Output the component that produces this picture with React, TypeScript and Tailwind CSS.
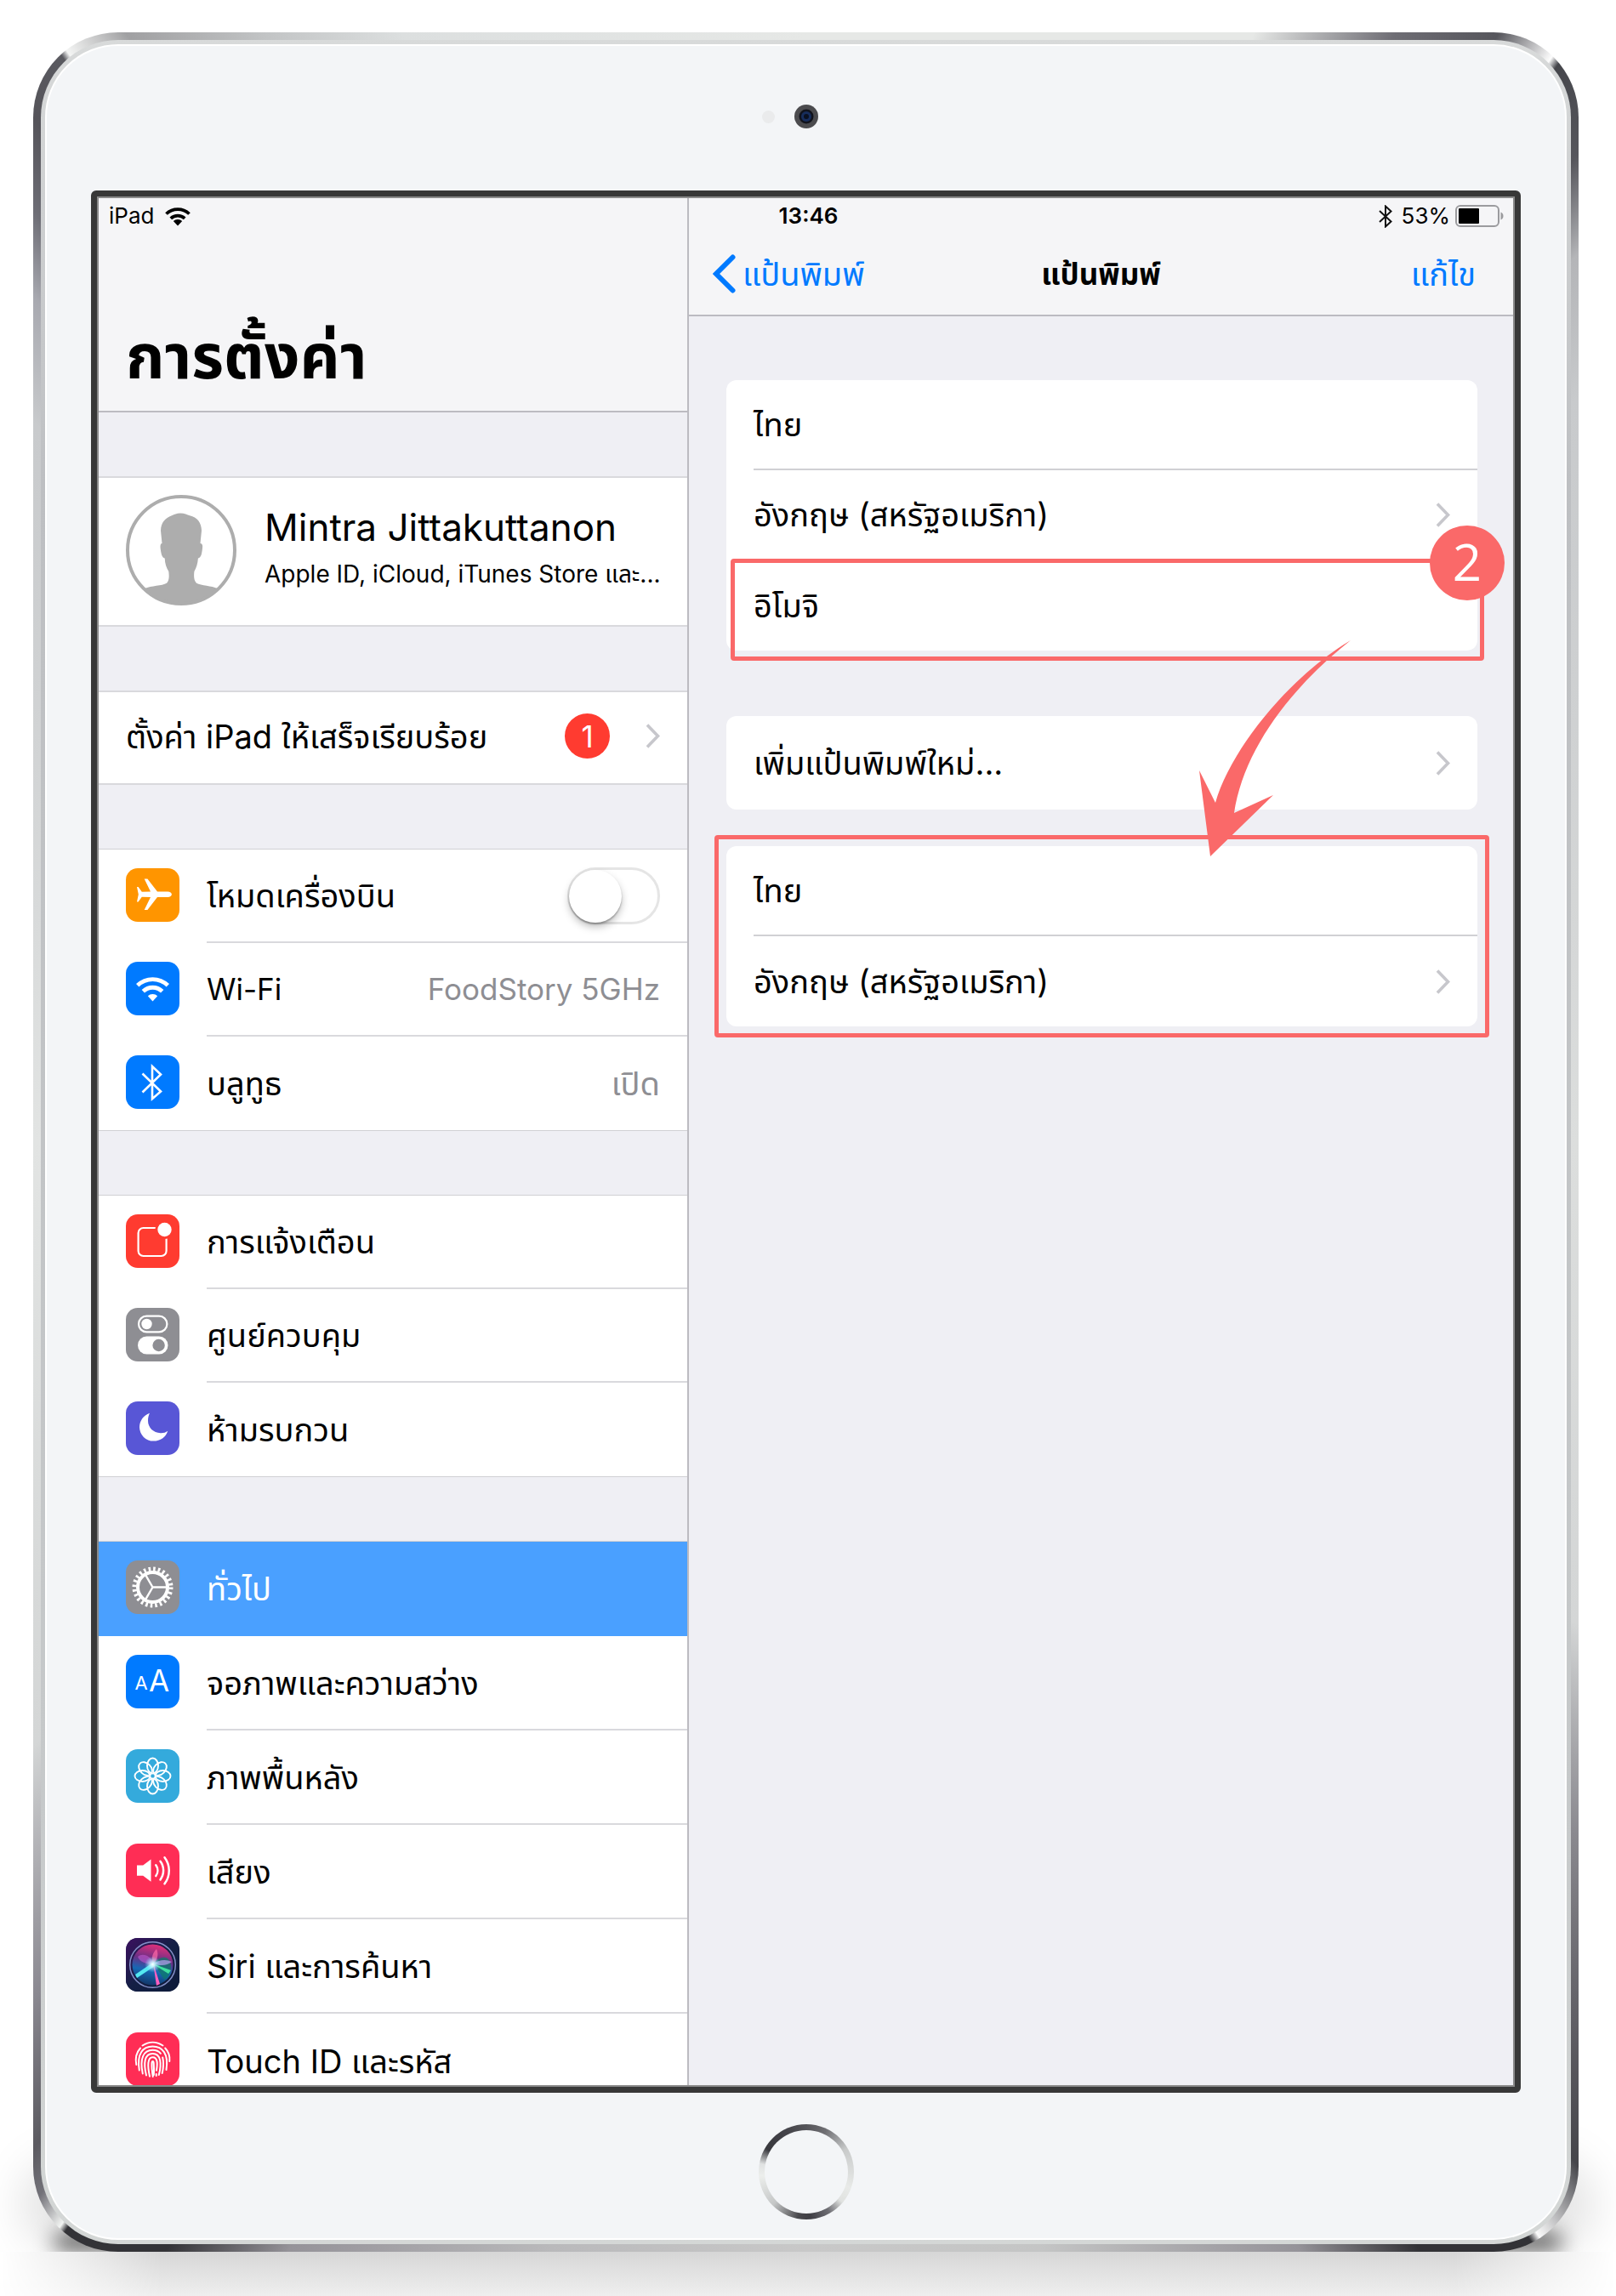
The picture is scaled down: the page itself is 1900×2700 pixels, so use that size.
import type { ReactNode } from "react";

type SettingRow = {
  label: string;
  icon: ReactNode;
  color: string;
  value?: string;
  latin?: boolean;
  toggle?: boolean;
  active?: boolean;
};

function Chevron() {
  return (
    <svg viewBox="0 0 17 29" className="h-[29px] w-[17px] shrink-0" fill="none" stroke="#c7c7cc" strokeWidth="3.6" aria-hidden="true">
      <path d="M2 1.5 14.5 14.5 2 27.5" />
    </svg>
  );
}

function PlaneIcon() {
  return (
    <path
      fill="#fff"
      d="M13 22h1.600l4.200 5.700 10.200-.300L21.700 12.600h3.700L37 27.400h12.200c2.700 0 4.700 1.400 4.700 3.300s-2 3.300-4.700 3.300H37L25.400 49h-3.700L29 34l-10.200-.300-4.200 5.700H13l1.800-8.700z"
    />
  );
}

function WifiIcon() {
  return (
    <>
      <path d="M13.700 27.800a25.500 25.500 0 0 1 35.600 0M20.300 34.800a16 16 0 0 1 22.400 0" fill="none" stroke="#fff" strokeWidth="4.800" />
      <path d="M31.500 46.500 25.800 40.300a8.200 8.200 0 0 1 11.400 0z" fill="#fff" />
    </>
  );
}

function BluetoothIcon() {
  return <path d="M19.500 21.500 41 42.500 31 51.200V13L41 22.500 19.500 43.500" fill="none" stroke="#fff" strokeWidth="2.600" />;
}

function NoticeIcon() {
  return (
    <>
      <rect x="14.600" y="16" width="33" height="33" rx="6" fill="none" stroke="#fff" strokeWidth="2.200" />
      <circle cx="45.500" cy="18" r="11" fill="#ff3b30" />
      <circle cx="45.500" cy="18" r="8.200" fill="#fff" />
    </>
  );
}

function ControlIcon() {
  return (
    <>
      <rect x="15" y="9.600" width="33.400" height="18.800" rx="9.400" fill="none" stroke="#fff" strokeWidth="2.200" />
      <circle cx="24.500" cy="19" r="6.200" fill="#fff" />
      <rect x="14" y="33.500" width="35.500" height="21" rx="10.500" fill="#fff" />
      <circle cx="38.600" cy="44" r="7.200" fill="#8e8e93" />
    </>
  );
}

function MoonIcon() {
  return (
    <path
      fill="#fff"
      d="M28 13.700C20.500 16.500 16 23 16 30.300a16.300 16.300 0 0 0 16.500 16.300C40.500 46.600 47 42 49.300 34.700c-2.500 1.900-5.600 2.700-8.600 2.500C32.300 37 26 30.800 26 22.800c0-3.400.7-6.500 2-9.100z"
    />
  );
}

function GearIcon() {
  return (
    <g fill="none" stroke="#fff">
      <circle cx="31.500" cy="31.500" r="21.500" strokeWidth="5" strokeDasharray="2.600 3.029" />
      <circle cx="31.500" cy="31.500" r="17.500" strokeWidth="4" />
      <path d="M31.500 31.500H49M31.500 31.500 22.700 16.300M31.500 31.500 22.700 46.700" strokeWidth="2.400" />
    </g>
  );
}

function TextSizeIcon() {
  return (
    <g fill="#fff" fontFamily="Inter, sans-serif">
      <text x="10.500" y="40.500" fontSize="22">A</text>
      <text x="27" y="43.300" fontSize="35">A</text>
    </g>
  );
}

function FlowerIcon() {
  return (
    <g fill="none" stroke="#fff" strokeWidth="1.900">
      {[0, 45, 90, 135, 180, 225, 270, 315].map((angle) => (
        <ellipse key={angle} cx="31.500" cy="19.500" rx="6.500" ry="9" transform={`rotate(${angle} 31.500 31.500)`} />
      ))}
    </g>
  );
}

function SpeakerIcon() {
  return (
    <>
      <path d="M13 25.500h7.200l9.300-7v26.200l-9.300-7H13z" fill="#fff" />
      <path d="M35.300 25.300a11 11 0 0 1 0 12.800M40.500 20.800a18 18 0 0 1 0 21.600M45.500 16.200a25.500 25.500 0 0 1 0 31" fill="none" stroke="#fff" strokeWidth="2.500" strokeLinecap="round" />
    </>
  );
}

function SiriIcon() {
  return (
    <>
      <defs>
        <linearGradient id="siri-back" x1="0" y1="0" x2="1" y2="1">
          <stop offset="0" stopColor="#3c1060" />
          <stop offset=".5" stopColor="#141f45" />
          <stop offset="1" stopColor="#0c1a38" />
        </linearGradient>
        <linearGradient id="siri-orb" x1=".6" y1="0" x2=".4" y2="1">
          <stop offset="0" stopColor="#e0307a" />
          <stop offset=".38" stopColor="#6a2f86" />
          <stop offset=".65" stopColor="#1668b4" />
          <stop offset="1" stopColor="#123668" />
        </linearGradient>
        <radialGradient id="siri-glow">
          <stop offset="0" stopColor="#fff" />
          <stop offset=".35" stopColor="#c8f4ff" stopOpacity=".8" />
          <stop offset="1" stopColor="#7ae0ff" stopOpacity="0" />
        </radialGradient>
      </defs>
      <rect width="63" height="63" fill="url(#siri-back)" />
      <circle cx="31.500" cy="31.500" r="24" fill="url(#siri-orb)" />
      <path d="M33 30c8-10 18-10 20 2 0 9-3 15-8 17z" fill="#0e7a6a" opacity=".75" />
      <path d="M14 22c6-5 16-1 19 9-9 0-17-3-19-9z" fill="#c05ad0" opacity=".6" />
      <path d="M32 31c-3-8 0-14 4-18 3 6 1 13-4 18z" fill="#ff6aa8" opacity=".7" />
      <path d="M32 30c8-5 16-5 22-2-6 5-14 5-22 2z" fill="#b8a0f0" opacity=".7" />
      <path d="m32 29 4 27 4-2z" fill="#ff5fc0" />
      <path d="M33 28 11 43l2 4 21-14z" fill="#54e8f0" />
      <path d="m31 30 19 12 3-4z" fill="#3fe0a0" />
      <circle cx="31.500" cy="31" r="9.500" fill="url(#siri-glow)" />
      <circle cx="31.500" cy="31.500" r="26.800" fill="none" stroke="#8490c8" strokeWidth="1.500" />
    </>
  );
}

function TouchIcon() {
  return (
    <g fill="none" stroke="#fff" strokeWidth="2" strokeLinecap="round">
      <path d="M19.500 15.500c7.500-5 16.500-5 24 0" />
      <path d="M12.300 38c-1.600-8 .2-14.500 4.700-19.500M46.200 18.500c4.300 4.500 5.800 9.500 5.100 15.500" />
      <path d="M15.800 44.500C12.500 25 20 16.500 31.500 16.500S50.500 25 47.500 44" />
      <path d="M19.800 48.500C16 31 20.500 20.800 31.500 20.800c4 0 7.300 1.500 9.400 4M43.200 29.500c1.400 5.500 1 12-.5 18.500" />
      <path d="M24 50.500c-3.500-14-2.300-25.500 7.500-25.500s10.800 12 7.300 25" />
      <path d="M28 51.700c-2.800-13-2.500-22.500 3.500-22.500s5.800 7.500 4.500 15.500" />
      <path d="M31.800 52c-1.200-7-1.500-12-1.300-16 .2-2.700 2-2.700 2.200 0 .4 5 .6 8.500.1 14M35.700 49v2" />
    </g>
  );
}

const groups: SettingRow[][] = [
  [
    { label: "โหมดเครื่องบิน", icon: <PlaneIcon />, color: "bg-[#ff9500]", toggle: true },
    { label: "Wi-Fi", icon: <WifiIcon />, color: "bg-[#007aff]", value: "FoodStory 5GHz", latin: true },
    { label: "บลูทูธ", icon: <BluetoothIcon />, color: "bg-[#007aff]", value: "เปิด" },
  ],
  [
    { label: "การแจ้งเตือน", icon: <NoticeIcon />, color: "bg-[#ff3b30]" },
    { label: "ศูนย์ควบคุม", icon: <ControlIcon />, color: "bg-[#8e8e93]" },
    { label: "ห้ามรบกวน", icon: <MoonIcon />, color: "bg-[#5856d6]" },
  ],
  [
    { label: "ทั่วไป", icon: <GearIcon />, color: "bg-[#8e8e93]", active: true },
    { label: "จอภาพและความสว่าง", icon: <TextSizeIcon />, color: "bg-[#007aff]" },
    { label: "ภาพพื้นหลัง", icon: <FlowerIcon />, color: "bg-[#34aadc]" },
    { label: "เสียง", icon: <SpeakerIcon />, color: "bg-[#ff2d55]" },
    { label: "Siri และการค้นหา", icon: <SiriIcon />, color: "bg-[#141f45]" },
    { label: "Touch ID และรหัส", icon: <TouchIcon />, color: "bg-[#ff2d55]" },
  ],
];

function StatusBar() {
  return (
    <div className="absolute inset-x-0 top-0 z-10 grid h-[42px] grid-cols-3 items-center pl-3 pr-[10px] text-[26px] leading-[30px]">
      <div className="flex items-center gap-3">
        iPad
        <svg viewBox="0 0 32 23" className="h-[23px] w-8" aria-label="Wi-Fi">
          <path d="M2.500 8.500a19.500 19.500 0 0 1 27 0M7.800 13.800a12 12 0 0 1 16.400 0" fill="none" stroke="#000" strokeWidth="3.800" />
          <path d="M16 22.500 10.800 17a7.500 7.500 0 0 1 10.400 0z" />
        </svg>
      </div>
      <div className="pl-1 text-center font-semibold">13:46</div>
      <div className="flex items-center justify-end gap-[6px]">
        <svg viewBox="0 0 18 27" className="mr-1 h-[27px] w-[18px]" fill="none" stroke="#111" strokeWidth="2" aria-label="Bluetooth">
          <path d="M2 7 15.500 19.500 9 25.500V1.500l6.500 6L2 20" />
        </svg>
        53%
        <svg viewBox="0 0 58 26" className="h-[26px] w-[58px]" aria-label="แบตเตอรี่">
          <rect x="1" y="1" width="50" height="24" rx="5" fill="none" stroke="#9b9b9e" strokeWidth="2" />
          <rect x="4" y="4" width="24" height="18" rx="1" />
          <path d="M53.500 8.500c4 1.500 4 7.500 0 9z" fill="#9b9b9e" />
        </svg>
      </div>
    </div>
  );
}

function Sidebar() {
  return (
    <aside className="w-[694px] shrink-0 border-r-2 border-[#bcbbc1]">
      <header className="flex h-[252px] items-end border-b-2 border-[#bcbbc1] bg-[#f5f5f7] pb-6 pl-8">
        <h1 className="text-[73px] leading-[80px] font-bold">การตั้งค่า</h1>
      </header>

      <a href="#account" className="mt-[75px] flex h-[177px] items-center gap-[33px] border-y-2 border-[#d9d9dd] bg-white pb-1 pl-8">
        <svg viewBox="0 0 130 130" className="size-[130px] shrink-0" aria-hidden="true">
          <clipPath id="avatar-clip">
            <circle cx="65" cy="65" r="63" />
          </clipPath>
          <path
            clipPath="url(#avatar-clip)"
            fill="#adadad"
            d="M64 21.500c5 0 8 1.800 11 2.700 9 2.300 13.700 8 14 17.800l-1.500 15c3 .2 2.800 3.500 2.400 6.500-.6 5-1.300 10.500-5 11-.5 6.500-2 11-4.500 15.500-.6 5.500-.6 10.500 2.600 13.700 5.500 3 18 3 24.500 6.300V130H22v-20c8-3.500 20.500-3 26-6.300 3-3 3-8 2.300-13.700-2.800-4.500-4.300-9-4.600-15.500-3.500-.5-4.200-6-5-11-.4-3-.4-6.300 1.800-6.500L41 42c.2-9.500 5-14.500 13-17.800 3-1.200 5.500-2.700 10-2.700z"
          />
          <circle cx="65" cy="65" r="63" fill="none" stroke="#adadad" strokeWidth="4" />
        </svg>
        <span className="flex flex-col gap-2 pb-2">
          <span className="text-[44px] leading-[56px]">Mintra Jittakuttanon</span>
          <span className="text-[28px] leading-[38px]">Apple ID, iCloud, iTunes Store และ...</span>
        </span>
      </a>

      <a href="#setup" className="mt-[75px] flex h-[111px] items-center border-y-2 border-[#d9d9dd] bg-white pr-8 pb-1 pl-8">
        <span className="flex-1 text-[38px] leading-[48px]">ตั้งค่า iPad ให้เสร็จเรียบร้อย</span>
        <span className="mr-[42px] flex size-[53px] items-center justify-center rounded-full bg-[#ff3b30] text-[35px] leading-[48px] text-white">1</span>
        <Chevron />
      </a>

      {groups.map((rows, index) => (
        <ul key={index} className="mt-[75px] border-y border-[#d0d0d4] bg-white last:[&>li]:h-[111px]">
          {rows.map((row) => (
            <li
              key={row.label}
              className={row.active ? "flex h-[111px] items-center bg-[#4aa0ff] pl-8 text-white" : "group flex h-[110px] items-center pl-8"}
            >
              <svg viewBox="0 0 63 63" className={`mr-8 mb-1 size-[63px] shrink-0 rounded-[14px] ${row.color}`} aria-hidden="true">
                {row.icon}
              </svg>
              <div
                className={`flex h-full flex-1 items-center justify-between border-b-2 pr-8 leading-[48px] group-last:border-0 ${row.active ? "border-transparent" : "border-[#d9d9dd]"} ${row.latin ? "text-[35px]" : "text-[38px]"}`}
              >
                {row.toggle ? (
                  <>
                    <label htmlFor="airplane">{row.label}</label>
                    <span className="relative flex">
                      <input id="airplane" type="checkbox" className="peer h-[67px] w-[109px] appearance-none rounded-full border-[3px] border-[#e5e5e5] bg-white" />
                      <span className="pointer-events-none absolute top-[3px] left-[2px] size-[62px] rounded-full bg-white shadow-[0_5px_10px_rgba(0,0,0,0.25),0_2px_2px_rgba(0,0,0,0.25)] peer-checked:left-11" />
                    </span>
                  </>
                ) : (
                  <a href="#general">{row.label}</a>
                )}
                {row.value ? <span className="text-[#8e8e93]">{row.value}</span> : null}
              </div>
            </li>
          ))}
        </ul>
      ))}
    </aside>
  );
}

function KeyboardRow({ label, link }: { label: string; link?: boolean }) {
  return (
    <li className="ml-8 h-[106px] border-b-2 border-[#d0d0d4] last:border-0 only:h-[110px]">
      <a href="#keyboard" className="flex h-full items-center justify-between pr-8 text-[38px] leading-[48px]">
        {label}
        {link ? <Chevron /> : null}
      </a>
    </li>
  );
}

function Keyboards() {
  return (
    <main className="min-w-0 flex-1">
      <nav className="grid h-[139px] grid-cols-3 items-end border-b-2 border-[#bcbbc1] bg-[#f5f5f7] px-7 pb-[22px] text-[38px] leading-[52px]">
        <a href="#back" className="flex items-center gap-2 text-[#007aff]">
          <svg viewBox="0 0 27 46" className="h-[46px] w-[27px]" fill="none" stroke="#007aff" strokeWidth="6" strokeLinecap="round" aria-hidden="true">
            <path d="M23.500 3.500 4 23l19.500 19.500" />
          </svg>
          แป้นพิมพ์
        </a>
        <h2 className="text-center text-[35px] font-bold">แป้นพิมพ์</h2>
        <button type="button" className="justify-self-end pr-4 text-[#007aff]">แก้ไข</button>
      </nav>

      <div className="mt-[75px] mr-[42px] ml-11">
        <section className="relative">
          <ul className="rounded-xl bg-white">
            <KeyboardRow label="ไทย" />
            <KeyboardRow label="อังกฤษ (สหรัฐอเมริกา)" link />
            <KeyboardRow label="อิโมจิ" />
          </ul>
          <div className="pointer-events-none absolute -right-2 -bottom-3 left-[5px] h-[120px] rounded-sm border-[5px] border-[#fa6969]" />
          <span className="absolute top-[171px] -right-8 flex size-[88px] items-center justify-center rounded-full bg-[#fa6969] pb-1 font-['Open_Sans','Noto_Sans',sans-serif] text-[60px] leading-[64px] text-white">
            2
          </span>
          <svg viewBox="0 0 178 254" className="pointer-events-none absolute top-[306px] right-[149px] z-10 h-[254px] w-[178px]" fill="#fa6969" aria-hidden="true">
            <path d="M178 0C110 40 38 125 19 191L0 153 13 254 87 182 41 203C52 130 105 58 178 0Z" />
          </svg>
        </section>

        <ul className="mt-[77px] rounded-xl bg-white">
          <KeyboardRow label="เพิ่มแป้นพิมพ์ใหม่..." link />
        </ul>

        <section className="relative mt-[43px]">
          <ul className="rounded-xl bg-white">
            <KeyboardRow label="ไทย" />
            <KeyboardRow label="อังกฤษ (สหรัฐอเมริกา)" link />
          </ul>
          <div className="pointer-events-none absolute -inset-x-[14px] -inset-y-[13px] rounded-sm border-[5px] border-[#fa6969]" />
        </section>
      </div>
    </main>
  );
}

export default function App() {
  return (
    <div className="relative isolate overflow-hidden bg-white pt-[38px] pr-11 pb-[52px] pl-[39px] font-['Inter','Noto_Sans_Thai','Noto_Sans',sans-serif] text-black">
      {/* floor shadow under the tablet */}
      <div className="absolute inset-x-6 bottom-[52px] -z-10 h-28 rounded-full bg-black/10 blur-xl" />
      <div className="absolute bottom-[56px] left-16 -z-10 h-4 w-24 rounded-full bg-black/80 blur-md" />
      <div className="absolute right-16 bottom-[56px] -z-10 h-4 w-24 rounded-full bg-black/80 blur-md" />
      <div className="absolute inset-x-0 bottom-0 -z-10 h-[52px] bg-white" />
      <div className="absolute inset-x-0 bottom-0 -z-10 h-[52px] bg-linear-to-b from-[#d6d6d6] to-[#efefef] mask-x-from-90%" />

      <div className="rounded-[100px] bg-[conic-gradient(#e6e8e6_22deg,#6e6d74_28deg,#56565c_32deg,#fdfdfd_34.5deg,#45464b_34.9deg,#56565c_38deg,#b4b5b8_41deg,#c8cacc_46deg,#dcdedd_90deg,#d4d6d6_122deg,#8a898f_132deg,#5f5e64_139deg,#46464b_143deg,#fafafa_146.2deg,#323236_146.6deg,#323236_151deg,#959399_156deg,#c4c5c5_168deg,#c8c8c8_180deg,#b9b9bb_193deg,#959399_205deg,#333337_210deg,#333337_214.2deg,#f2f4f2_214.5deg,#737279_216deg,#5b5a60_217.5deg,#8a8890_222deg,#d4d6d6_232deg,#e2e4e3_270deg,#c8cacc_313deg,#a8a9b0_317.6deg,#6e6e76_320.3deg,#55545a_323deg,#5a5a60_325.6deg,#f4f5f4_325.9deg,#a0a0a2_328.5deg,#c2c4c5_334deg,#dcdfdf_340deg,#e6e8e6)] px-[9px] py-[9px]">
        <div className="rounded-[91px] bg-[linear-gradient(to_bottom,#d8dada,#bdbfc2_20%,#c6c9ca_80%,#d4d7d6)] p-[5px]">
          <div className="rounded-[86px] border-2 border-white bg-[#f3f5f7] px-[52px]">
            <div className="relative flex h-[170px] items-start justify-center pt-[69px]" aria-hidden="true">
              <span className="absolute top-[76px] left-1/2 -ml-[52px] size-[15px] rounded-full bg-[#eaebec]" />
              <svg viewBox="0 0 28 28" className="size-7">
                <circle cx="14" cy="14" r="14" fill="#4b4b4e" />
                <circle cx="14" cy="14" r="8.500" fill="#11131c" />
                <circle cx="14" cy="14" r="6" fill="#172d5c" />
                <circle cx="14" cy="14" r="3" fill="#0a1020" />
              </svg>
            </div>

            <div className="rounded-md border-[7px] border-[#383838] bg-[#8a8a8a] p-[2px]">
              <div className="relative flex aspect-[416/555] overflow-hidden bg-[#efeff4]">
                <StatusBar />
                <Sidebar />
                <Keyboards />
              </div>
            </div>

            <div className="flex h-[171px] justify-center pt-[37px]">
              <button
                type="button"
                aria-label="Home"
                className="size-[112px] rounded-full bg-[conic-gradient(#55555a,#6e6e72_25deg,#c8caca_60deg,#e8eae8_110deg,#e0e2e0_130deg,#6e6e74_150deg,#3e3e44_175deg,#48484c_190deg,#c4c6c6_225deg,#eceeec_265deg,#e0e2e2_280deg,#38383d_300deg,#44444a_335deg,#55555a)] p-[7px]"
              >
                <span className="block size-full rounded-full bg-[#f3f5f7]" />
              </button>
            </div>
          </div>
        </div>
      </div>
    </div>
  );
}
